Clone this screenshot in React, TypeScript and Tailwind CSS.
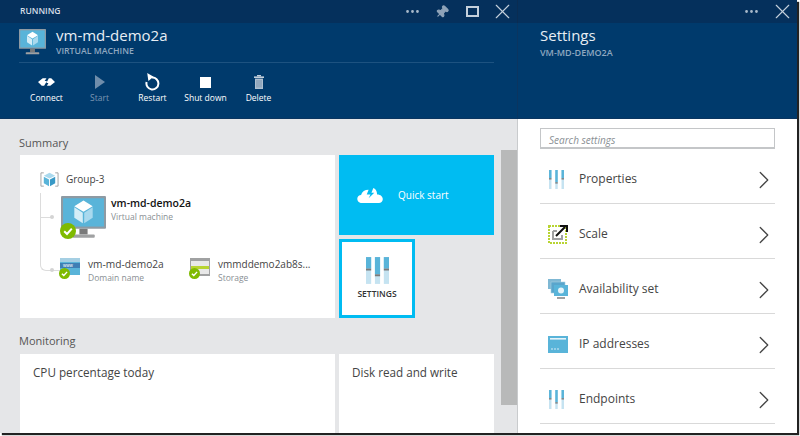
import React from 'react';
import { ChevronRight, MoreHorizontal, Pin, X } from 'lucide-react';

// three level bars; thin is the small version used in the settings list
const Sliders = ({ className, thin }: { className?: string; thin?: boolean }) => {
  const w = thin ? 3.6 : 5.4;
  const xs = thin ? [1, 10.2, 19.4] : [0, 9.3, 18.6];
  const fills = [12, 18, 12];
  return (
    <svg viewBox="0 0 24 28" className={className}>
      {xs.map((x, i) => (
        <g key={x}>
          <rect x={x} y="0" width={w} height="28" fill="#c5e3f1" />
          <rect x={x} y="0" width={w} height={fills[i]} fill="#59b4d9" />
          <rect x={x} y={fills[i]} width={w} height="2" fill="#7a7a7a" />
        </g>
      ))}
    </svg>
  );
};

const Cube = ({ x, y, s }: { x: number; y: number; s: number }) => (
  <g transform={`translate(${x} ${y}) scale(${s})`}>
    <path d="M0 -10 L9 -5 L0 0 L-9 -5 Z" fill="#ffffff" />
    <path d="M-9 -4 L-0.7 0.8 L-0.7 10 L-9 5.2 Z" fill="#d4edf7" />
    <path d="M9 -4 L0.7 0.8 L0.7 10 L9 5.2 Z" fill="#a9d9ee" />
  </g>
);

const Monitor = ({ className }: { className?: string }) => (
  <svg viewBox="0 0 44 38" preserveAspectRatio="none" className={className}>
    <rect x="0" y="0" width="44" height="29" rx="1" fill="#8e9aa3" />
    <rect x="2" y="2" width="40" height="25" fill="#59b4d9" />
    <rect x="18" y="29" width="8" height="5" fill="#7a7a7a" />
    <rect x="11" y="34" width="22" height="3" rx="1" fill="#a0a1a2" />
    <Cube x={22} y={14} s={1} />
  </svg>
);

const Check = ({ className }: { className?: string }) => (
  <svg viewBox="0 0 16 16" className={className}>
    <circle cx="8" cy="8" r="8" fill="#7fba00" />
    <path d="M4.2 8.3 L7 11 L11.8 5.6" fill="none" stroke="#ffffff" strokeWidth="2" />
  </svg>
);

const Connect = () => (
  <svg viewBox="0 0 18 10" className="w-[17px] h-[10px]">
    <path d="M0 5 L5 1 H9 L7 4 L9.5 4 L6.5 9 H4 Z" fill="#ffffff" />
    <path d="M18 5 L13 9 H9.5 L11 6 L8.8 6 L11.5 1 H14 Z" fill="#ffffff" />
  </svg>
);

const Start = () => (
  <svg viewBox="0 0 10 14" className="w-[10px] h-[14px]">
    <path d="M0 0 L10 7 L0 14 Z" fill="#6f8dab" />
  </svg>
);

const Restart = () => (
  <svg viewBox="0 0 15 18" className="w-[15px] h-[18px]">
    <path d="M7 4.5 A6 6 0 1 1 1.6 9" fill="none" stroke="#ffffff" strokeWidth="2" />
    <path d="M2.2 0 L8.6 3.8 L3.4 8 Z" fill="#ffffff" />
  </svg>
);

const Trash = () => (
  <svg viewBox="0 0 10 14" className="w-[10px] h-[14px]">
    <rect x="3" y="0" width="4" height="1.4" fill="#c3cfdb" />
    <rect x="0" y="1.4" width="10" height="1.6" fill="#c3cfdb" />
    <rect x="1" y="3.6" width="8" height="10.4" fill="#aebfd0" />
    <path d="M3 5 V12.6 M5 5 V12.6 M7 5 V12.6" stroke="#5f7f9f" strokeWidth="0.7" />
  </svg>
);

const Actions = [
  { label: 'Connect', icon: <Connect />, dim: false },
  { label: 'Start', icon: <Start />, dim: true },
  { label: 'Restart', icon: <Restart />, dim: false },
  { label: 'Shut down', icon: <div className="w-[11px] h-[11px] bg-white" />, dim: false },
  { label: 'Delete', icon: <Trash />, dim: false },
];

const WwwIcon = () => (
  <svg viewBox="0 0 20 17" className="w-[20px] h-[17px]">
    <rect width="20" height="17" fill="#59b4d9" />
    <rect width="20" height="4" fill="#a5cfe3" />
    <rect y="5" width="20" height="5" fill="#3e7fb5" />
    <text x="3" y="9.3" fontSize="4.5" fill="#fff" fontFamily="Liberation Sans, sans-serif">www</text>
  </svg>
);

const StorageIcon = () => (
  <svg viewBox="0 0 20 18" className="w-[20px] h-[18px]">
    <rect width="20" height="18" fill="#a0a1a2" />
    <rect x="1" y="3" width="18" height="5" fill="#e8e8e8" />
    <rect x="1" y="8" width="18" height="3" fill="#b8d432" />
    <rect x="1" y="11" width="18" height="5" fill="#e8e8e8" />
  </svg>
);

const ScaleIcon = () => (
  <svg viewBox="0 0 20 20" className="w-[20px] h-[20px]">
    <rect x="1" y="2" width="17" height="17" fill="none" stroke="#b8d432" strokeWidth="2" strokeDasharray="2 1" />
    <path d="M5 7 H9 M5 7 V15 H14 V11" fill="none" stroke="#a0a1a2" strokeWidth="2" />
    <path d="M8 12 L17 3 M12 2 H19 V8" fill="none" stroke="#111111" strokeWidth="2" />
  </svg>
);

const AvailabilityIcon = () => (
  <svg viewBox="0 0 20 21" className="w-[20px] h-[21px]">
    <rect x="0" y="0" width="13" height="10" fill="#7fb8d4" />
    <rect x="3" y="3" width="14" height="11" fill="#59a5cc" stroke="#a9cfe0" strokeWidth="0.6" />
    <rect x="6" y="6" width="14" height="11" fill="#59b4d9" />
    <circle cx="13" cy="11.5" r="3" fill="#e6f4fa" />
    <rect x="9" y="18" width="8" height="2" fill="#a0a1a2" />
  </svg>
);

const IpIcon = () => (
  <svg viewBox="0 0 20 17" className="w-[20px] h-[17px]">
    <rect width="20" height="17" fill="#59b4d9" />
    <rect x="2" y="2" width="16" height="1.6" fill="#e6f4fa" />
    <circle cx="4" cy="13" r="0.8" fill="#e6f4fa" />
    <circle cx="7" cy="13" r="0.8" fill="#e6f4fa" />
    <circle cx="10" cy="13" r="0.8" fill="#e6f4fa" />
  </svg>
);

const SettingsRows = [
  { label: 'Properties', icon: <Sliders thin className="w-[17px] h-[19px]" /> },
  { label: 'Scale', icon: <ScaleIcon /> },
  { label: 'Availability set', icon: <AvailabilityIcon /> },
  { label: 'IP addresses', icon: <IpIcon /> },
  { label: 'Endpoints', icon: <Sliders thin className="w-[17px] h-[19px]" /> },
];

const App: React.FC = () => {
  return (
    <div className="w-[800px] h-[436px] overflow-hidden bg-white font-['Open_Sans',sans-serif]">
      <div className="w-[797px] h-[433px] flex overflow-hidden shadow-[2px_2px_1px_#222]">
        {/* VM blade */}
        <div className="w-[518px] shrink-0 flex flex-col">
          <div className="h-[23px] shrink-0 bg-[#05305c] border-r border-[#0a2c52] flex items-center pl-[20px] pr-[2px] text-white">
            <span className="text-[8.5px] font-semibold text-[#d5dde6]">RUNNING</span>
            <MoreHorizontal className="ml-auto w-[17px] h-[17px] text-[#a9b9ca]" />
            <Pin className="ml-[14px] w-[14px] h-[14px] text-[#8fa3b8] rotate-45" fill="currentColor" />
            <div className="ml-[17px] w-[13px] h-[11px] border-2 border-[#c4d0dc]" />
            <X className="ml-[11px] w-[25px] h-[25px] text-[#c4d0dc]" strokeWidth={1.1} />
          </div>
          <div className="h-[96px] shrink-0 bg-[#003a6c] border-r border-b border-[#0a3560] pl-[19px] text-white">
            <div className="w-[475px] h-[40px] border-b border-[#1d5280] flex items-start">
              <Monitor className="w-[27px] h-[26px] mt-[6px]" />
              <div className="ml-[10px] mt-[2px]">
                <div className="text-[15px] leading-[20px] text-[#e8eef4]">vm-md-demo2a</div>
                <div className="text-[8.7px] leading-[11px] mt-[1px] font-semibold text-[#8fa8c0]">VIRTUAL MACHINE</div>
              </div>
            </div>
            <div className="flex mt-[9px] ml-[1px]">
              {Actions.map((a) => (
                <div key={a.label} className={`w-[53px] flex flex-col items-center ${a.dim ? 'text-[#7c97b3]' : 'text-white'}`}>
                  <div className="h-[20px] flex items-center">{a.icon}</div>
                  <span className="text-[8.5px] leading-[11px] whitespace-nowrap">{a.label}</span>
                </div>
              ))}
            </div>
          </div>
          <div className="flex-1 bg-[#e5e6e8] border-r border-[#c9cbcd] flex min-h-0">
            <div className="w-[501px] pl-[20px] shrink-0 overflow-hidden">
              <div className="text-[11px] leading-[16px] text-[#555] mt-[16px] -ml-[1px]">Summary</div>
              <div className="flex gap-[4px] mt-[4px]">
                <div className="w-[315px] h-[163px] bg-white pl-[20px] pt-[15px] text-[#444]">
                  <div className="flex items-center h-[18px]">
                    <svg viewBox="0 0 20 20" className="w-[19px] h-[19px]">
                      <path d="M4 3 H1 V17 H4 M16 3 H19 V17 H16" fill="none" stroke="#a0a1a2" strokeWidth="1" />
                      <path d="M10 3 L16 6 L10 9 L4 6 Z" fill="#a9d9ee" />
                      <path d="M4 7 L9.5 10 V17 L4 14 Z" fill="#59b4d9" />
                      <path d="M16 7 L10.5 10 V17 L16 14 Z" fill="#3999c6" />
                    </svg>
                    <span className="ml-[7px] text-[10px] text-[#444]">Group-3</span>
                  </div>
                  <div className="flex mt-[5px]">
                    <div className="w-[20px] shrink-0 h-[78px] border-l border-b border-[#dcdcdc] rounded-bl-[6px] relative">
                      <div className="absolute left-0 top-[24px] w-[10px] h-[1px] bg-[#dcdcdc]" />
                      <div className="absolute left-[9px] top-[22px] w-[4px] h-[4px] rounded-full bg-[#d4d4d4]" />
                      <div className="absolute left-[9px] -bottom-[2px] w-[4px] h-[4px] rounded-full bg-[#d4d4d4]" />
                    </div>
                    <div>
                      <div className="flex h-[47px]">
                        <div className="relative w-[46px] h-[47px]">
                          <Monitor className="w-[45px] h-[43px] ml-[1px] mt-[3px]" />
                          <Check className="absolute left-0 bottom-[1px] w-[16px] h-[16px]" />
                        </div>
                        <div className="ml-[5px]">
                          <div className="text-[10.5px] leading-[14px] mt-[3px] font-semibold text-[#111]">vm-md-demo2a</div>
                          <div className="text-[8.5px] leading-[12px] mt-[1px] text-[#8a8f94]">Virtual machine</div>
                        </div>
                      </div>
                      <div className="flex mt-[18px]">
                        <div className="flex w-[130px]">
                          <div className="relative w-[20px] h-[20px]">
                            <WwwIcon />
                            <Check className="absolute -left-[1px] bottom-[-1px] w-[11px] h-[11px]" />
                          </div>
                          <div className="ml-[8px]">
                            <div className="text-[10.2px] leading-[13px] text-[#444]">vm-md-demo2a</div>
                            <div className="text-[8.5px] leading-[13px] text-[#8a8f94]">Domain name</div>
                          </div>
                        </div>
                        <div className="flex">
                          <div className="relative w-[20px] h-[20px]">
                            <StorageIcon />
                            <Check className="absolute -left-[1px] bottom-[-1px] w-[11px] h-[11px]" />
                          </div>
                          <div className="ml-[8px]">
                            <div className="text-[10px] leading-[13px] text-[#444]">vmmddemo2ab8s...</div>
                            <div className="text-[8.5px] leading-[13px] text-[#8a8f94]">Storage</div>
                          </div>
                        </div>
                      </div>
                    </div>
                  </div>
                </div>
                <div className="w-[155px]">
                  <div className="h-[80px] bg-[#00bcf2] flex items-center pl-[18px] text-white">
                    <svg viewBox="0 0 28 18" className="w-[27px] h-[17px]">
                      <path d="M5 17 C1 17 0 14 0 12.5 C0 10 2 8.5 4 8.5 C5 5 8 3 12 3 L10 8 H14 L12 12 L18 6 H15 L17 1 C19 1.5 21 4 21 8 C25 8 27 10.5 27 13 C27 15.5 25 17 23 17 Z" fill="#ffffff" />
                    </svg>
                    <span className="ml-[14px] text-[10px]">Quick start</span>
                  </div>
                  <div className="w-[76px] h-[79px] mt-[4px] bg-white border-[3px] border-[#00bcf2] flex flex-col items-center pt-[15px]">
                    <Sliders className="w-[23px] h-[27px]" />
                    <span className="text-[8.5px] leading-[12px] font-semibold text-[#333] mt-[4px]">SETTINGS</span>
                  </div>
                </div>
              </div>
              <div className="text-[11px] leading-[16px] text-[#555] mt-[15px] -ml-[1px]">Monitoring</div>
              <div className="flex gap-[4px] mt-[5px]">
                <div className="w-[315px] h-[80px] bg-white pl-[13px] pt-[10px] text-[11.7px] leading-[16px] text-[#444]">CPU percentage today</div>
                <div className="w-[155px] h-[80px] bg-white pl-[13px] pt-[10px] text-[11.7px] leading-[16px] text-[#444]">Disk read and write</div>
              </div>
            </div>
            <div className="w-[16px] ml-auto">
              <div className="h-[31px]" />
              <div className="h-[255px] bg-[#b8b9b9]" />
            </div>
          </div>
        </div>
        {/* Settings blade */}
        <div className="flex-1 flex flex-col">
          <div className="h-[23px] shrink-0 bg-[#05305c] flex items-center justify-end pr-[2px]">
            <MoreHorizontal className="w-[17px] h-[17px] text-[#a9b9ca]" />
            <X className="ml-[10px] w-[25px] h-[25px] text-[#c4d0dc]" strokeWidth={1.1} />
          </div>
          <div className="h-[96px] shrink-0 bg-[#003a6c] border-b border-[#0a3560] pl-[22px] pt-[2px]">
            <div className="text-[15px] leading-[20px] text-[#e8eef4]">Settings</div>
            <div className="text-[9px] leading-[11px] mt-[2px] font-semibold text-[#8fa8c0]">VM-MD-DEMO2A</div>
          </div>
          <div className="flex-1 bg-white pl-[22px] pr-[22px] pt-[9px] overflow-hidden">
            <div className="h-[21px] border border-[#c4c6c8] border-b-2 pl-[8px] pt-[4px] flex items-center text-[10px] italic text-[#8a8f94]">Search settings</div>
            {SettingsRows.map((r) => (
              <div key={r.label} className="h-[55px] border-b border-[#d9d9d9] flex items-center pl-[8px] pt-[6px]">
                <div className="w-[31px] shrink-0">{r.icon}</div>
                <span className="text-[12px] text-[#444]">{r.label}</span>
                <ChevronRight className="ml-auto -mr-[4px] mt-[1px] w-[30px] h-[30px] text-[#444]" strokeWidth={1} />
              </div>
            ))}
          </div>
        </div>
      </div>
    </div>
  );
};

export default App;
